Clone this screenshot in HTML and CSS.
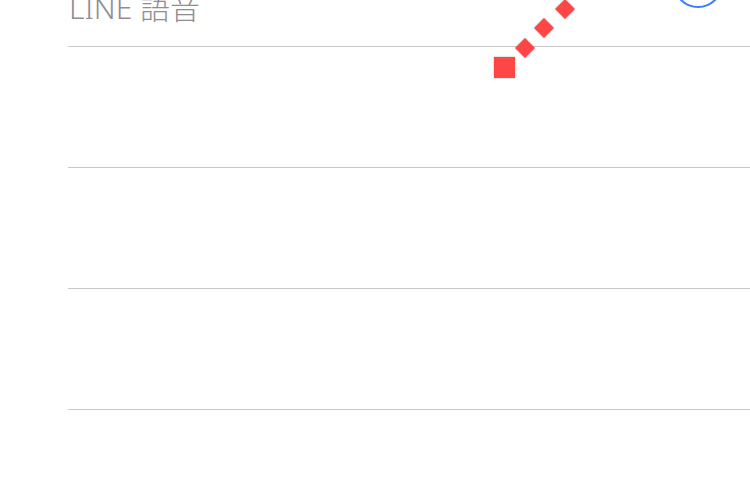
FILE: index.html
```html
<!DOCTYPE html>
<html lang="zh-Hant">
<head>
    <meta charset="UTF-8">
    <meta name="viewport" content="width=device-width, initial-scale=1.0">
    <title>LINE 語音</title>
    <link rel="stylesheet" href="styles.css">
</head>
<body>
    <div class="screen">
        <div class="list">
            <div class="header">
                <span class="title">LINE 語音</span>
                <span class="info-ring"></span>
            </div>
            <div class="row"></div>
            <div class="row"></div>
            <div class="row"></div>
        </div>

        <!-- tutorial pointer -->
        <div class="pointer">
            <span class="pointer-head"></span>
            <span class="dot dot1"></span>
            <span class="dot dot2"></span>
            <span class="dot dot3"></span>
            <span class="dot dot4"></span>
        </div>
    </div>
</body>
</html>
```

FILE: styles.css
```css
body {
    margin: 0;
    padding: 0;
    background-color: #fff;
    font-family: 'Noto Sans', 'Noto Sans CJK TC', sans-serif;
}

.screen {
    position: relative;
    width: 750px;
    height: 480px;
    overflow: hidden;
}

.list {
    margin-left: 68px;
}

.header {
    position: relative;
    height: 46px;
    border-bottom: 1px solid #c8c8c8;
}

.title {
    position: absolute;
    left: 1px;
    top: -14px;
    font-size: 30px;
    line-height: 44px;
    font-weight: 300;
    color: #8e8e93;
    white-space: nowrap;
}

.info-ring {
    position: absolute;
    left: 605px;
    top: -42px;
    width: 46px;
    height: 46px;
    border: 2px solid #3a7ff6;
    border-radius: 50%;
}

.row {
    height: 120px;
    border-bottom: 1px solid #c8c8c8;
}

.pointer-head {
    position: absolute;
    left: 494px;
    top: 57px;
    width: 21px;
    height: 21px;
    background-color: #ff4646;
    box-shadow: 0 0 2px rgba(0, 0, 0, 0.3);
}

.dot {
    position: absolute;
    width: 14px;
    height: 14px;
    background-color: #ff4646;
    box-shadow: 0 0 2px rgba(0, 0, 0, 0.3);
    transform: rotate(45deg);
}

.dot1 { left: 518px; top: 41px; }
.dot2 { left: 537px; top: 21px; }
.dot3 { left: 558px; top: 2px; }
.dot4 { left: 578px; top: -18px; }
```
